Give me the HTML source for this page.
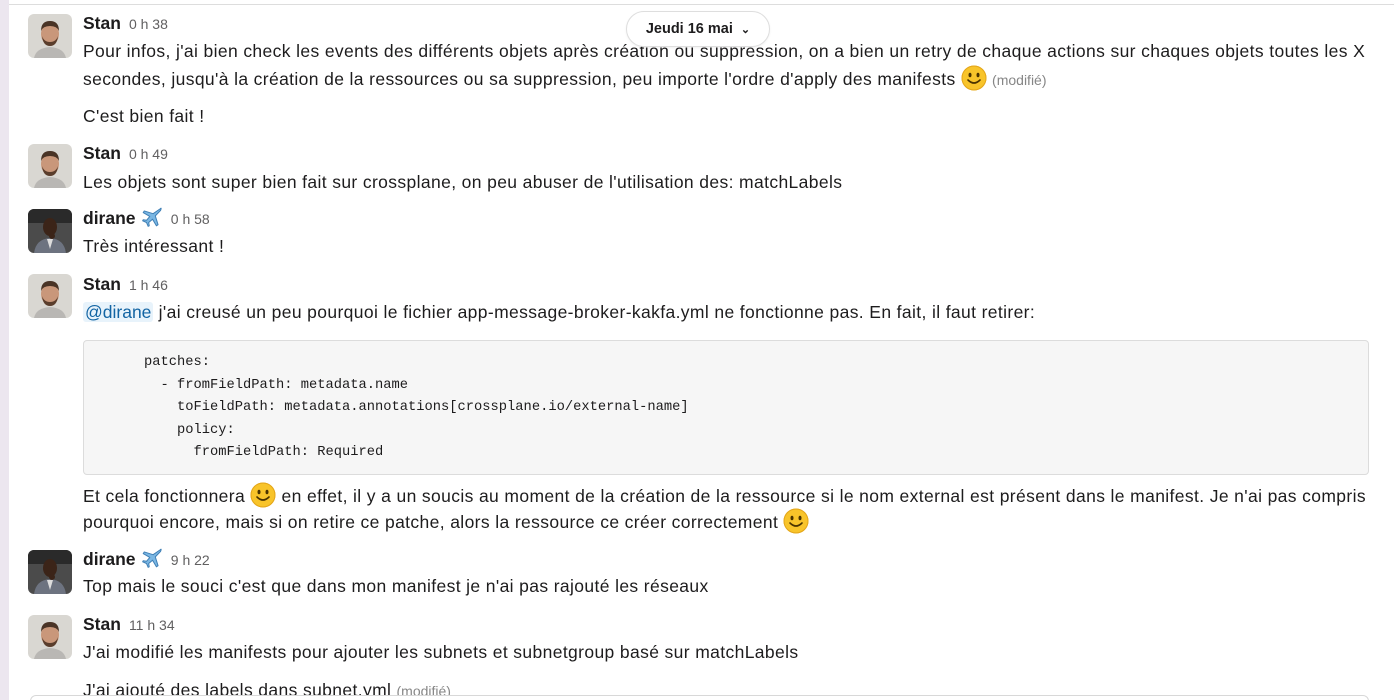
<!DOCTYPE html>
<html><head><meta charset="utf-8"><style>
html,body{margin:0;width:1394px;height:700px;overflow:hidden}
body{background:#fff;font-family:"Liberation Sans",sans-serif;color:#1d1c1d;position:relative}
.strip{position:absolute;left:0;top:0;width:9px;height:700px;background:#ece6ef}
.top{position:absolute;left:9px;right:0;top:4px;height:1px;background:#dddddd}
.l{position:absolute;left:83px;white-space:nowrap;font-size:17.5px;letter-spacing:.37px;line-height:26px}
.n{font-weight:bold;font-size:17.5px;letter-spacing:0}
.t{color:#616061;font-size:14px;margin-left:8px;letter-spacing:0}
.av{position:absolute;left:28px;width:44px;height:44px;border-radius:6px;overflow:hidden}
.mod{color:#868686;font-size:14px;letter-spacing:0}
.sm{display:inline-block;width:26px;height:26px;vertical-align:-6px}
.code{position:absolute;left:83px;top:340px;width:1284px;height:133px;background:#f6f6f6;border:1px solid #dcdcdc;border-radius:4px}
.code pre{margin:0;position:absolute;left:60px;top:11px;font-family:"Liberation Mono",monospace;font-size:13.75px;line-height:22.5px;color:#1d1c1d}
.pill{position:absolute;left:626px;top:11px;width:142px;height:34px;border:1px solid #dedede;border-radius:18px;background:#fff;box-shadow:0 1px 2px rgba(0,0,0,.06);font-weight:bold;font-size:14.5px;line-height:34px;text-align:center}
.ment{background:#e8f3fb;color:#1264a3;border-radius:3px;padding:0 2px;letter-spacing:0}
.bot{position:absolute;left:30px;top:695px;width:1337px;height:10px;border:1px solid #d8d8d8;border-radius:8px;background:#fff}
</style></head><body>
<div class="strip"></div><div class="top"></div>

<svg width="0" height="0" style="position:absolute"><defs>
<symbol id="stan" viewBox="0 0 44 44"><rect width="44" height="44" fill="#d9d7d2"/><path d="M6 44 Q8 34 22 33 Q36 34 38 44Z" fill="#b9b7b4"/><ellipse cx="22" cy="20" rx="9" ry="11" fill="#c9977a"/><path d="M13 17 Q13 7 22 7 Q31 7 31 17 Q29 12 22 12 Q15 12 13 17Z" fill="#4a3426"/><path d="M14 22 Q15 32 22 32 Q29 32 30 22 Q28 28 22 28 Q16 28 14 22Z" fill="#5a3d2c"/></symbol>
<symbol id="dir" viewBox="0 0 44 44"><rect width="44" height="44" fill="#4b4b4b"/><rect width="44" height="14" fill="#2a2a2a"/><path d="M6 44 Q8 30 22 29 Q36 30 38 44Z" fill="#6d7380"/><ellipse cx="22" cy="18" rx="7" ry="9" fill="#3b2418"/><path d="M19 30 L22 40 L25 30Z" fill="#ddd"/><ellipse cx="24" cy="27" rx="3" ry="3" fill="#3b2418"/></symbol>
<symbol id="smile" viewBox="0 0 26 26"><circle cx="13" cy="13" r="12.5" fill="#f8c42a"/><circle cx="13" cy="13" r="12" fill="none" stroke="#e3a51a" stroke-width="1"/><ellipse cx="9" cy="10" rx="1.5" ry="2.3" fill="#4a3300"/><ellipse cx="17" cy="10" rx="1.5" ry="2.3" fill="#4a3300"/><path d="M7 15 Q13 21 19 15" stroke="#4a3300" stroke-width="1.6" fill="none" stroke-linecap="round"/></symbol>
<symbol id="plane" viewBox="0 0 20 20"><path d="M17.5 2.5 Q19 1 17.8 4 L13 9 L15.5 17 L14 18 L10.5 12 L7 15 L7.5 18 L6.5 18.5 L5 15 L1.5 13.5 L2 12.5 L5 13 L8 9.5 L2 6 L3 4.5 L11 7Z" fill="#7bb7e3" stroke="#3f7fb5" stroke-width=".9" stroke-linejoin="round"/></symbol>
</defs></svg>

<svg class="av" style="top:14px"><use href="#stan"/></svg>
<div class="l" style="top:10px"><span class="n">Stan</span><span class="t">0 h 38</span></div>
<div class="l" style="top:38px">Pour infos, j'ai bien check les events des différents objets après création ou suppression, on a bien un retry de chaque actions sur chaques objets toutes les X</div>
<div class="l" style="top:65px">secondes, jusqu'à la création de la ressources ou sa suppression, peu importe l'ordre d'apply des manifests <svg class="sm"><use href="#smile"/></svg> <span class="mod">(modifié)</span></div>
<div class="l" style="top:103px">C'est bien fait !</div>

<div class="pill">Jeudi 16 mai <span style="font-size:11px;margin-left:4px">&#8964;</span></div>

<svg class="av" style="top:144px"><use href="#stan"/></svg>
<div class="l" style="top:140px"><span class="n">Stan</span><span class="t">0 h 49</span></div>
<div class="l" style="top:169px">Les objets sont super bien fait sur crossplane, on peu abuser de l'utilisation des: matchLabels</div>

<svg class="av" style="top:209px"><use href="#dir"/></svg>
<div class="l" style="top:205px"><span class="n">dirane</span> <svg width="22" height="22" style="vertical-align:-4px"><use href="#plane"/></svg><span class="t">0 h 58</span></div>
<div class="l" style="top:233px">Très intéressant !</div>

<svg class="av" style="top:274px"><use href="#stan"/></svg>
<div class="l" style="top:271px"><span class="n">Stan</span><span class="t">1 h 46</span></div>
<div class="l" style="top:299px"><span class="ment">@dirane</span> j'ai creusé un peu pourquoi le fichier app-message-broker-kakfa.yml ne fonctionne pas. En fait, il faut retirer:</div>
<div class="code"><pre>patches:
  - fromFieldPath: metadata.name
    toFieldPath: metadata.annotations[crossplane.io/external-name]
    policy:
      fromFieldPath: Required</pre></div>
<div class="l" style="top:482px">Et cela fonctionnera <svg class="sm"><use href="#smile"/></svg> en effet, il y a un soucis au moment de la création de la ressource si le nom external est présent dans le manifest. Je n'ai pas compris</div>
<div class="l" style="top:508px">pourquoi encore, mais si on retire ce patche, alors la ressource ce créer correctement <svg class="sm"><use href="#smile"/></svg></div>

<svg class="av" style="top:550px"><use href="#dir"/></svg>
<div class="l" style="top:546px"><span class="n">dirane</span> <svg width="22" height="22" style="vertical-align:-4px"><use href="#plane"/></svg><span class="t">9 h 22</span></div>
<div class="l" style="top:573px">Top mais le souci c'est que dans mon manifest je n'ai pas rajouté les réseaux</div>

<svg class="av" style="top:615px"><use href="#stan"/></svg>
<div class="l" style="top:611px"><span class="n">Stan</span><span class="t">11 h 34</span></div>
<div class="l" style="top:639px">J'ai modifié les manifests pour ajouter les subnets et subnetgroup basé sur matchLabels</div>
<div class="l" style="top:677px">J'ai ajouté des labels dans subnet.yml <span class="mod">(modifié)</span></div>
<div class="bot"></div>
</body></html>
